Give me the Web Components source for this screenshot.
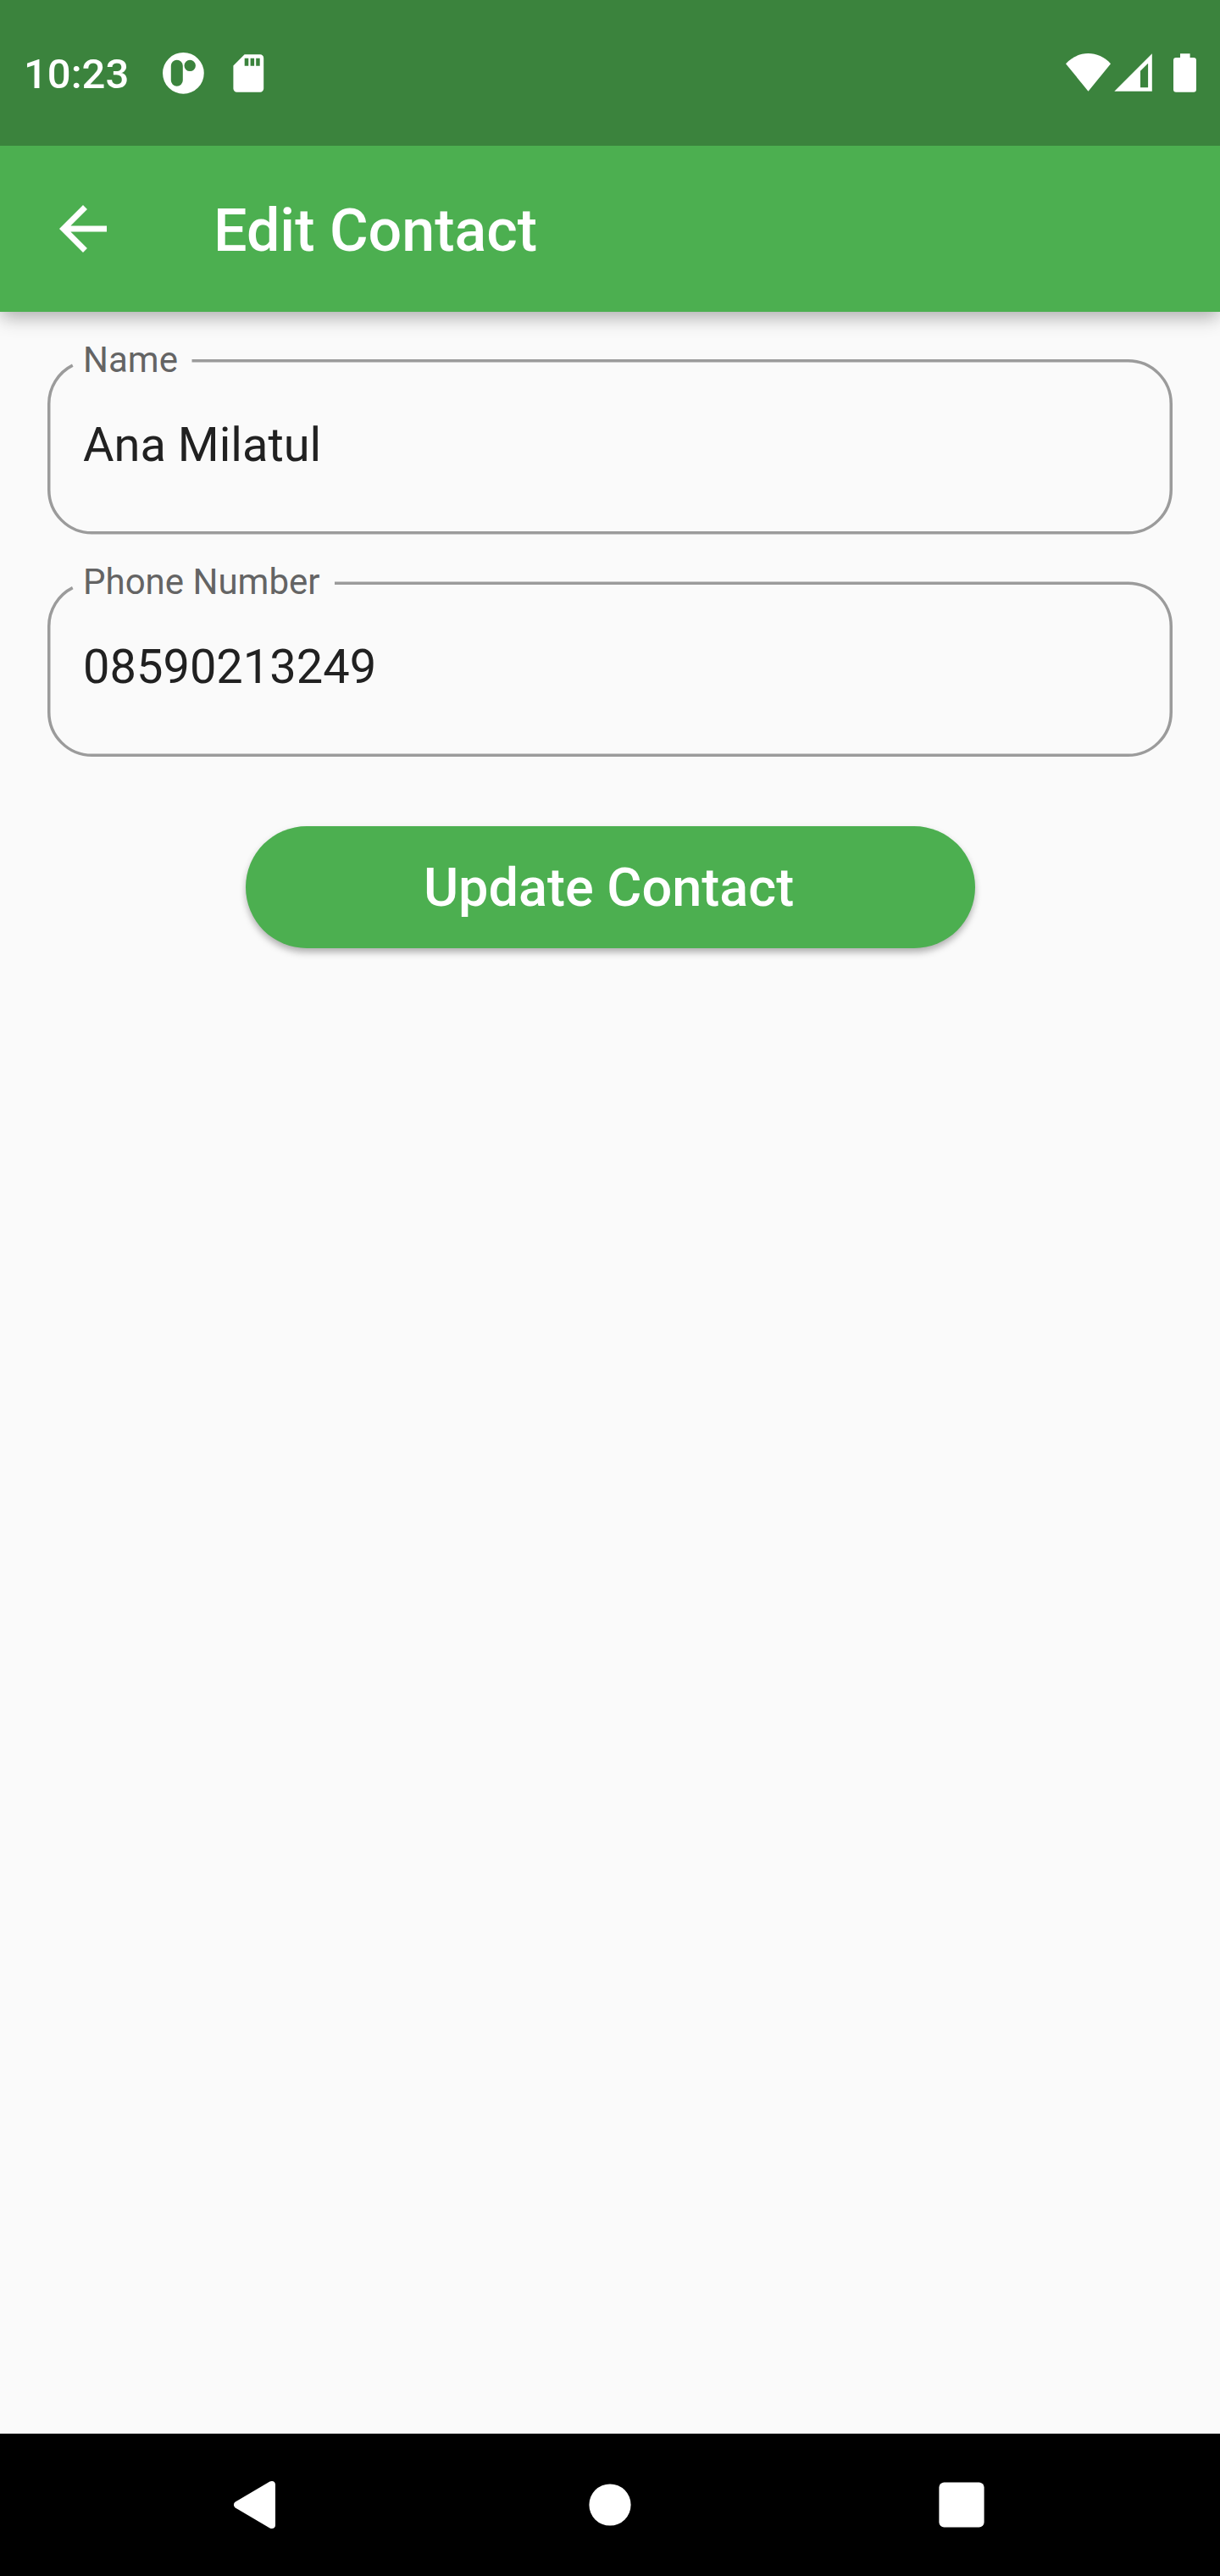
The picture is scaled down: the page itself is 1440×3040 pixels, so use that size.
<!DOCTYPE html>
<html lang="en">
<head>
<meta charset="utf-8">
<title>Edit Contact</title>
<style>
  html, body { margin: 0; padding: 0; }
  body { background: #fafafa; font-family: Roboto, "Liberation Sans", sans-serif; }
</style>
</head>
<body>
<phone-screen>
  <status-bar slot="status">10:23</status-bar>
  <app-bar slot="bar">Edit Contact</app-bar>
  <outlined-field label="Name" gap-end="170.5">Ana Milatul</outlined-field>
  <outlined-field label="Phone Number" gap-end="339" shift="0.5">08590213249</outlined-field>
  <pill-button>Update Contact</pill-button>
  <nav-bar slot="nav"></nav-bar>
</phone-screen>
<script>
  const define = (name, markup, ready) => {
    const template = document.createElement('template');
    template.innerHTML = markup;
    customElements.define(name, class extends HTMLElement {
      constructor() {
        super();
        this.attachShadow({ mode: 'open' }).append(template.content.cloneNode(true));
      }
      connectedCallback() { if (ready) ready(this, this.shadowRoot); }
    });
  };

  define('phone-screen', `
    <style>
      :host { display: flex; flex-direction: column; width: 1440px; height: 3040px; background: #fafafa; overflow: hidden; }
      main { flex: 1; display: flex; flex-direction: column; gap: 55px; padding: 56px; box-sizing: border-box; }
    </style>
    <slot name="status"></slot>
    <slot name="bar"></slot>
    <main><slot></slot></main>
    <slot name="nav"></slot>`);

  define('status-bar', `
    <style>
      :host { display: flex; align-items: flex-start; height: 172px; box-sizing: border-box; padding: 58px 24px 0 28px; background: #3b833d; color: #fff; }
      .time { margin-top: 1px; font-size: 49px; font-weight: 500; line-height: 58px; width: 160px; white-space: nowrap; }
      svg { display: block; fill: #fff; }
      .left, .right { display: flex; }
      .left { gap: 26px; }
      .right { margin-left: auto; }
    </style>
    <span class="time"><slot></slot></span>
    <span class="left">
      <svg width="56" height="56" viewBox="188 58 56 56"><path fill-rule="evenodd" d="M216.4 62a24.3 24.3 0 1 1 0 48.7a24.3 24.3 0 1 1 0-48.7zM208.8 70.8a7 7 0 0 0-7 7v17a7 7 0 0 0 14 0v-17a7 7 0 0 0-7-7zM224.2 70.7a6.7 6.7 0 1 0 0 13.4a6.7 6.7 0 1 0 0-13.4z"/></svg>
      <svg width="44" height="56" viewBox="270 58 44 56"><path fill-rule="evenodd" d="M288.6 64.2H307a4.2 4.2 0 0 1 4.2 4.2V104.5a4.2 4.2 0 0 1-4.2 4.2H279.6a4.2 4.2 0 0 1-4.2-4.2V77.4zM288.7 68.7v9h4.6v-9zM295.6 68.7v9h4.5v-9zM302.2 68.7v9h4.5v-9z"/></svg>
    </span>
    <span class="right">
      <svg width="162" height="56" viewBox="1254 58 162 56">
        <path d="M1258 75.2C1273 59.1 1296 59.1 1311 75.2L1284.5 107.7z"/>
        <path fill-rule="evenodd" d="M1359.8 63.3V107.8H1315.3zM1355.1 74.7L1346 83.7V103.2H1355.1z"/>
        <path d="M1393 63.2h11.6v4.7h4.2a3.2 3.2 0 0 1 3.2 3.2v34.5a3.2 3.2 0 0 1-3.2 3.2h-20.6a3.2 3.2 0 0 1-3.2-3.2v-34.5a3.2 3.2 0 0 1 3.2-3.2h4.8z"/>
      </svg>
    </span>`);

  define('app-bar', `
    <style>
      :host { display: flex; align-items: center; gap: 112px; height: 196px; box-sizing: border-box; padding: 0 56px; background: #4caf50; color: #fff;
        position: relative; z-index: 1; clip-path: inset(0 0 -60px 0); box-shadow: 0 9px 22px -2px rgba(0,0,0,.24), 0 4px 18px rgba(0,0,0,.1); }
      svg { display: block; fill: #fff; }
      h1 { margin: 0; padding-top: 3px; font-size: 70px; font-weight: 500; line-height: 82px; white-space: nowrap; }
    </style>
    <svg width="84" height="84" viewBox="0 0 24 24"><path d="M20 11H7.83l5.59-5.59L12 4l-8 8 8 8 1.41-1.41L7.83 13H20v-2z"/></svg>
    <h1><slot></slot></h1>`);

  define('outlined-field', `
    <style>
      :host { display: grid; grid-template: 207px / 1328px; }
      svg { grid-area: 1 / 1; display: block; overflow: visible; }
      path { fill: none; stroke: #9b9b9b; stroke-width: 3.5; }
      .text { grid-area: 1 / 1; display: flex; flex-direction: column; gap: 42px; margin-top: -24px; padding-left: 42px; white-space: nowrap; }
      label { font-size: 42px; line-height: 50px; color: #646464; }
      .value { font-size: 56px; line-height: 66px; color: #212121; }
    </style>
    <svg width="1328" height="207" viewBox="0 0 1328 207"><path/></svg>
    <div class="text"><label></label><span class="value"><slot></slot></span></div>`,
    (host, root) => {
      root.querySelector('label').textContent = host.getAttribute('label');
      const path = root.querySelector('path');
      // Outline runs clockwise from the end of the label gap to its start on the corner arc.
      path.setAttribute('d', `M${host.getAttribute('gap-end')} 1.75H1275.5A50.75 50.75 0 0 1 1326.25 52.5V154A50.75 50.75 0 0 1 1275.5 204.75H52.5A50.75 50.75 0 0 1 1.75 154V52.5A50.75 50.75 0 0 1 29.75 7.13`);
      path.setAttribute('transform', `translate(0 ${host.getAttribute('shift') || 0})`);
    });

  define('pill-button', `
    <style>
      :host { display: flex; justify-content: center; margin-top: 27px; }
      button { all: unset; box-sizing: border-box; display: flex; align-items: center; justify-content: center; width: 861px; height: 143.7px; padding: 3px 3px 0 0; border-radius: 72px;
        background: #4caf50; color: #fff; font-size: 63px; font-weight: 500; line-height: 74px; white-space: nowrap;
        box-shadow: 0 6px 9px -1px rgba(0,0,0,.26), 0 2px 9px rgba(0,0,0,.08); }
    </style>
    <button><slot></slot></button>`);

  define('nav-bar', `
    <style>
      :host { display: flex; align-items: center; height: 168px; box-sizing: border-box; padding-left: 272px; background: #000; }
      svg { display: block; fill: #fff; }
      .home { margin: 0 359px 0 364px; }
    </style>
    <svg width="56" height="60" viewBox="272 2926 56 60"><path d="M277.8 2952.6L318.5 2928.6C321.5 2926.9 325 2928.6 325 2932V2980C325 2983.4 321.5 2985.1 318.5 2983.4L277.8 2959.4C275.3 2957.9 275.3 2954.1 277.8 2952.6z"/></svg>
    <svg class="home" width="56" height="56" viewBox="692 2928 56 56"><circle cx="720" cy="2956" r="24.6"/></svg>
    <svg width="56" height="56" viewBox="1107 2928 56 56"><rect x="1108.4" y="2929.4" width="53.2" height="53.2" rx="6"/></svg>`);
</script>
</body>
</html>
